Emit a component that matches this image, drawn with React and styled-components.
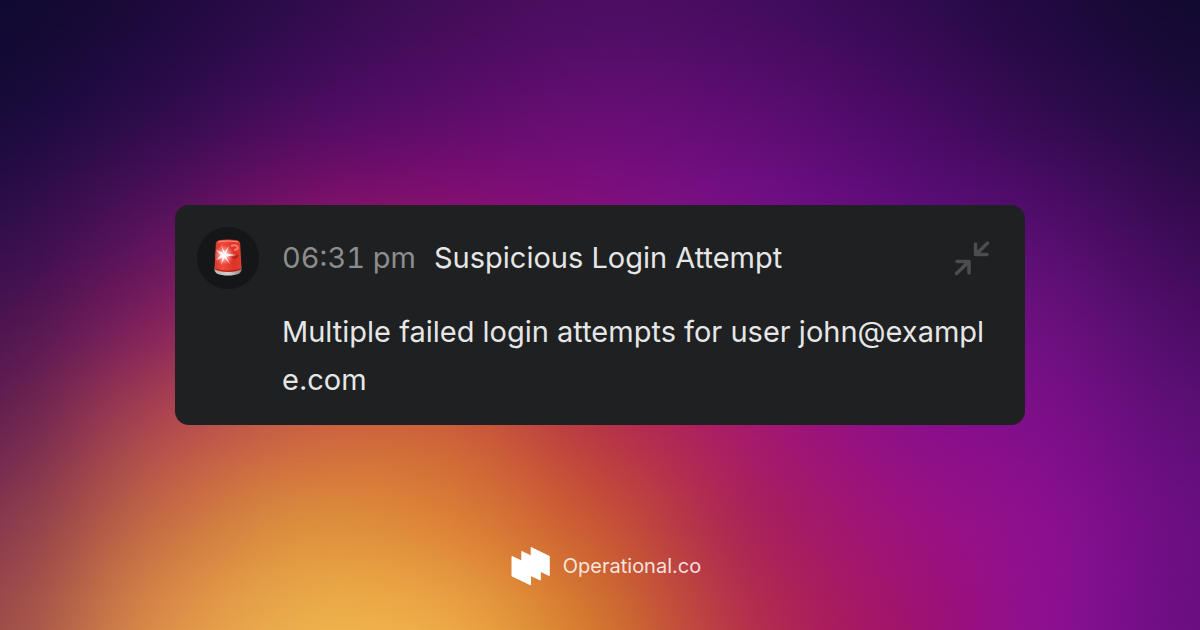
import React from "react";
import styled, { createGlobalStyle } from "styled-components";

const GlobalStyle = createGlobalStyle`
  *, *::before, *::after { box-sizing: border-box; }
  body {
    margin: 0;
    background: #2a0b48;
    font-family: Inter, "Liberation Sans", sans-serif;
  }
`;

/* Colour mesh: control colours on an even grid, top row first. */
const MESH = [
  ["#110a31", "#1d0a3b", "#2f0c4c", "#420d58", "#4b0e62", "#440d5e", "#330b52", "#200a3f", "#130a31"],
  ["#180b3a", "#2c0c4a", "#480d5e", "#5a0d69", "#640e72", "#5c0d70", "#480b63", "#300b4e", "#1d0b3d"],
  ["#2d0e48", "#52115a", "#7a1366", "#851170", "#82107c", "#750f84", "#600d7a", "#4e0d68", "#340b50"],
  ["#4a1450", "#7d205c", "#a83858", "#a83058", "#a01e68", "#941080", "#7c0f88", "#68107c", "#4a0d64"],
  ["#682350", "#a94450", "#c85e44", "#c95c3c", "#b63448", "#a5196e", "#8c1088", "#7c0f88", "#5c0f76"],
  ["#893a4e", "#c46a45", "#dc8e3e", "#dc8238", "#c85636", "#ab2458", "#9c137c", "#8a108e", "#690f80"],
  ["#9e4d4a", "#d88a48", "#ecae4c", "#eca846", "#d27530", "#b5304c", "#a1146c", "#8c1090", "#690f80"],
];

const SUBDIVISIONS = 4;

const toChannels = (hex) => [1, 3, 5].map((at) => parseInt(hex.slice(at, at + 2), 16));

const curve = (a, b, c, d, t) =>
  0.5 * (2 * b + (c - a) * t + (2 * a - 5 * b + 4 * c - d) * t * t + (3 * b - a - 3 * c + d) * t * t * t);

/* Adds points on a smooth curve between the neighbouring colours of a list. */
function refine(list, mix) {
  const at = (i) => list[Math.max(0, Math.min(list.length - 1, i))];
  const count = (list.length - 1) * SUBDIVISIONS;
  return Array.from({ length: count + 1 }, (_, n) => {
    const i = Math.floor(n / SUBDIVISIONS);
    const t = (n % SUBDIVISIONS) / SUBDIVISIONS;
    return mix(at(i - 1), at(i), at(i + 1), at(i + 2), t);
  });
}

const mixColour = (a, b, c, d, t) => b.map((_, k) => curve(a[k], b[k], c[k], d[k], t));
const mixRow = (a, b, c, d, t) => b.map((_, k) => mixColour(a[k], b[k], c[k], d[k], t));

const BANDS = refine(
  MESH.map((row) => refine(row.map(toChannels), mixColour)),
  mixRow
).map((row) => row.map((colour) => `rgb(${colour.map((v) => Math.round(v)).join(" ")})`));

const bandMask = (i) => {
  if (i === 0) return "none";
  const step = 100 / (BANDS.length - 1);
  return `linear-gradient(to bottom, transparent ${(i - 1) * step}%, #000 ${i * step}%)`;
};

const Page = styled.div`
  display: grid;
  min-height: 100vh;
  overflow: hidden;
`;

const Band = styled.div`
  grid-area: 1 / 1;
  background: linear-gradient(to right, ${({ $stops }) => $stops.join(", ")});
  mask-image: ${({ $index }) => bandMask($index)};
`;

const Content = styled.div`
  grid-area: 1 / 1;
  z-index: 1;
  display: grid;
  grid-template-rows: 1fr auto 1fr;
  justify-items: center;
`;

const Card = styled.main`
  grid-row: 2;
  width: calc(100% - 48px);
  max-width: 850px;
  padding: 22px 32px 21px 22px;
  border-radius: 14px;
  background: #1e2021;
  display: grid;
  grid-template-columns: 62px 1fr;
  column-gap: 23px;
  row-gap: 19px;
`;

const Avatar = styled.div`
  width: 62px;
  height: 62px;
  border-radius: 50%;
  background: #141617;
  display: grid;
  place-items: center;
`;

const Header = styled.header`
  display: flex;
  align-items: center;
  gap: 18px;
  padding-right: 3px;
  font-size: 29px;
  line-height: 48px;
`;

const Time = styled.time`
  color: #8c8d8e;
  font-variant-numeric: tabular-nums;
  white-space: nowrap;
`;

const Title = styled.h1`
  margin: 0;
  flex: 1;
  font-size: inherit;
  font-weight: 400;
  color: #e6e6e6;
`;

const CollapseButton = styled.button`
  display: grid;
  padding: 0;
  border: 0;
  background: none;
  color: #4c4d4e;
  cursor: pointer;
`;

const Message = styled.p`
  grid-column: 2;
  margin: 0;
  font-size: 29px;
  line-height: 48px;
  color: #e6e6e6;
  word-break: break-all;
`;

const Footer = styled.footer`
  grid-row: 3;
  align-self: end;
  padding-bottom: 32px;
`;

const Brand = styled.a`
  display: flex;
  align-items: center;
  color: #ffffffd9;
  font-size: 20px;
  line-height: 24px;
  font-weight: 400;
  text-decoration: none;
`;

function Siren() {
  return (
    <svg width="32" height="40" viewBox="0 0 32 40" role="img" aria-label="Siren">
      <defs>
        <linearGradient id="dome" x1="0" x2="1">
          <stop offset="0" stopColor="#d8372b" />
          <stop offset="0.3" stopColor="#f04a3c" />
          <stop offset="0.75" stopColor="#dc3226" />
          <stop offset="1" stopColor="#e2402f" />
        </linearGradient>
        <linearGradient id="base" x1="0" x2="1">
          <stop offset="0" stopColor="#b9b2b0" />
          <stop offset="0.5" stopColor="#d6d1cf" />
          <stop offset="1" stopColor="#8f8988" />
        </linearGradient>
        <radialGradient id="glow">
          <stop offset="0" stopColor="#fff" />
          <stop offset="0.35" stopColor="#ffd3d3" stopOpacity="0.8" />
          <stop offset="1" stopColor="#ff8a80" stopOpacity="0" />
        </radialGradient>
      </defs>
      <path d="M2.500 31 Q2 37.500 16 37.500 Q30 37.500 29.500 31 L29 28 H3 Z" fill="url(#base)" />
      <path d="M3.800 6 Q4 2.500 8 2 Q16 1 24 2 Q28 2.500 28.200 6 L29.500 30 Q28 34 16 34 Q4 34 2.500 30 Z" fill="url(#dome)" />
      <path d="M6 4 Q16 2 26 4" fill="none" stroke="#ff9a8a" strokeWidth="1.200" />
      <path d="M19 8 Q25 6 26 10 Q25 12 22 12" fill="none" stroke="#ff8d7c" strokeWidth="2" opacity="0.800" />
      <path d="M19 19 Q24 21 26 17" fill="none" stroke="#9f1712" strokeWidth="2" opacity="0.700" />
      <path d="M3 31 Q16 35.500 29 31" fill="none" stroke="#a91f18" strokeWidth="1" />
      <circle cx="12" cy="17" r="10" fill="url(#glow)" />
      <path d="M12 17 L9 7 L12.600 14 L17 8 L14 15.500 L24 17 L14 18.500 L18 26 L12.600 20 L9 27 L10.500 19.500 L4 22 L9 17 L4 12 L10.500 14.500 Z" fill="#fff" opacity="0.850" />
    </svg>
  );
}

function CollapseIcon() {
  return (
    <svg width="36" height="36" viewBox="0 0 36 36" fill="none" stroke="currentColor" strokeWidth="3.500" strokeLinecap="round" strokeLinejoin="round" aria-hidden="true">
      <path d="M33.500 3 L22 14.500 M21.500 4 V14.500 H33" />
      <path d="M2.500 33.500 L14.500 22 M3 21.500 H15 V33" />
    </svg>
  );
}

function Logo() {
  return (
    <svg width="64" height="64" viewBox="0 0 64 64" fill="#fff" stroke="#fff" strokeLinejoin="round" aria-hidden="true">
      <path d="M13 22.500 L22.800 27 V17.500 L32.200 22 V13.500 L50.200 22.300 V41.500 L41.300 37.300 V46 L31.500 41.500 V50.800 L13 42 Z" />
    </svg>
  );
}

export default function App() {
  return (
    <Page>
      <GlobalStyle />
      {BANDS.map((stops, i) => (
        <Band key={i} $stops={stops} $index={i} />
      ))}
      <Content>
        <Card>
          <Avatar>
            <Siren />
          </Avatar>
          <Header>
            <Time dateTime="18:31">06:31 pm</Time>
            <Title>Suspicious Login Attempt</Title>
            <CollapseButton type="button" aria-label="Collapse">
              <CollapseIcon />
            </CollapseButton>
          </Header>
          <Message>Multiple failed login attempts for user john@example.com</Message>
        </Card>
        <Footer>
          <Brand href="https://operational.co">
            <Logo />
            Operational.co
          </Brand>
        </Footer>
      </Content>
    </Page>
  );
}
